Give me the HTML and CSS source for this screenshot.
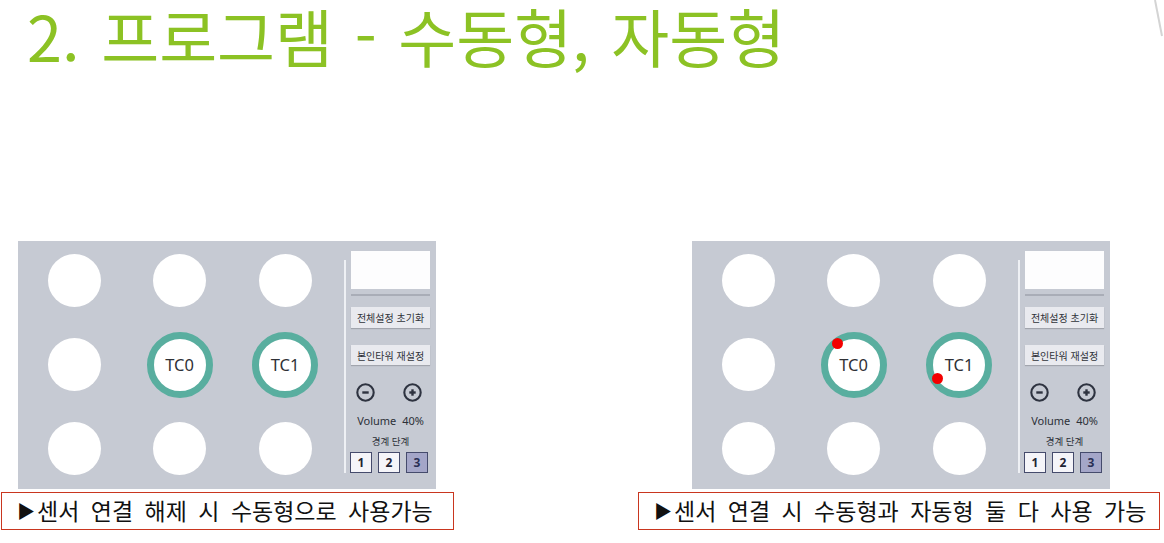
FILE: index.html
```html
<!DOCTYPE html>
<html lang="ko">
<head>
    <meta charset="UTF-8">
    <meta name="viewport" content="width=device-width, initial-scale=1.0">
    <title>프로그램 - 수동형, 자동형</title>
    <link rel="stylesheet" href="styles.css">
</head>
<body>
    <svg class="corner-mark" width="12" height="40" viewBox="0 0 12 40">
        <line x1="3" y1="0" x2="10" y2="36" stroke="#d4d4d4" stroke-width="2"/>
    </svg>

    <h1 class="title">2. 프로그램 - 수동형, 자동형</h1>

    <div class="panels">
        <!-- 센서 연결 해제 상태 -->
        <div class="panel">
            <div class="pads">
                <div class="pad"></div>
                <div class="pad"></div>
                <div class="pad"></div>
                <div class="pad"></div>
                <div class="pad ring">TC0</div>
                <div class="pad ring">TC1</div>
                <div class="pad"></div>
                <div class="pad"></div>
                <div class="pad"></div>
            </div>
            <div class="divider"></div>
            <div class="side">
                <div class="display"></div>
                <div class="rule"></div>
                <button class="side-btn">전체설정 초기화</button>
                <button class="side-btn second">본인타워 재설정</button>
                <div class="vol-ctrl">
                    <svg width="19" height="19" viewBox="0 0 19 19"><circle cx="9.5" cy="9.5" r="8.2" fill="none" stroke="#2e3340" stroke-width="2.1"/><line x1="6.3" y1="9.5" x2="12.7" y2="9.5" stroke="#2e3340" stroke-width="2.4"/></svg>
                    <svg width="19" height="19" viewBox="0 0 19 19"><circle cx="9.5" cy="9.5" r="8.2" fill="none" stroke="#2e3340" stroke-width="2.1"/><line x1="6.3" y1="9.5" x2="12.7" y2="9.5" stroke="#2e3340" stroke-width="2.4"/><line x1="9.5" y1="6.3" x2="9.5" y2="12.7" stroke="#2e3340" stroke-width="2.4"/></svg>
                </div>
                <div class="vol-label">Volume 40%</div>
                <div class="level-label">경계 단계</div>
                <div class="levels">
                    <span class="level">1</span>
                    <span class="level">2</span>
                    <span class="level active">3</span>
                </div>
            </div>
        </div>

        <!-- 센서 연결 상태 -->
        <div class="panel">
            <div class="pads">
                <div class="pad"></div>
                <div class="pad"></div>
                <div class="pad"></div>
                <div class="pad"></div>
                <div class="pad ring">TC0<span class="dot dot-tl"></span></div>
                <div class="pad ring">TC1<span class="dot dot-bl"></span></div>
                <div class="pad"></div>
                <div class="pad"></div>
                <div class="pad"></div>
            </div>
            <div class="divider"></div>
            <div class="side">
                <div class="display"></div>
                <div class="rule"></div>
                <button class="side-btn">전체설정 초기화</button>
                <button class="side-btn second">본인타워 재설정</button>
                <div class="vol-ctrl">
                    <svg width="19" height="19" viewBox="0 0 19 19"><circle cx="9.5" cy="9.5" r="8.2" fill="none" stroke="#2e3340" stroke-width="2.1"/><line x1="6.3" y1="9.5" x2="12.7" y2="9.5" stroke="#2e3340" stroke-width="2.4"/></svg>
                    <svg width="19" height="19" viewBox="0 0 19 19"><circle cx="9.5" cy="9.5" r="8.2" fill="none" stroke="#2e3340" stroke-width="2.1"/><line x1="6.3" y1="9.5" x2="12.7" y2="9.5" stroke="#2e3340" stroke-width="2.4"/><line x1="9.5" y1="6.3" x2="9.5" y2="12.7" stroke="#2e3340" stroke-width="2.4"/></svg>
                </div>
                <div class="vol-label">Volume 40%</div>
                <div class="level-label">경계 단계</div>
                <div class="levels">
                    <span class="level">1</span>
                    <span class="level">2</span>
                    <span class="level active">3</span>
                </div>
            </div>
        </div>
    </div>

    <div class="captions">
        <div class="caption first"><span class="arrow">▶</span>센서 연결 해제 시 수동형으로 사용가능</div>
        <div class="caption second"><span class="arrow">▶</span>센서 연결 시 수동형과 자동형 둘 다 사용 가능</div>
    </div>
</body>
</html>
```

FILE: styles.css
```css
body {
    margin: 0;
    width: 1164px;
    height: 543px;
    overflow: hidden;
    position: relative;
    background-color: #fff;
    font-family: "Noto Sans", "Noto Sans CJK KR", sans-serif;
}
.corner-mark {
    position: absolute;
    top: 0;
    right: 0;
}
.title {
    margin: 0;
    padding-left: 27px;
    height: 70px;
    font-family: "Noto Sans CJK KR", sans-serif;
    font-size: 63px;
    font-weight: 400;
    line-height: 70px;
    word-spacing: 4px;
    white-space: nowrap;
    color: #8cc224;
}
.panels {
    display: flex;
    gap: 256px;
    margin-top: 171px;
    padding-left: 18px;
}
.panel {
    display: flex;
    width: 418px;
    height: 248px;
    background-color: #c6cad3;
}
.pads {
    display: grid;
    grid-template-columns: repeat(3, 66px);
    grid-auto-rows: 66px;
    column-gap: 39.5px;
    row-gap: 18px;
    padding: 6.5px 0 0 23px;
    place-items: center;
    align-content: start;
}
.pad {
    width: 53px;
    height: 53px;
    border-radius: 50%;
    background-color: #fff;
}
.ring {
    position: relative;
    width: 66px;
    height: 66px;
    box-sizing: border-box;
    border: 7px solid #59ae9f;
    display: flex;
    justify-content: center;
    align-items: center;
    font-size: 16.5px;
    color: #2f3136;
}
.dot {
    position: absolute;
    width: 11px;
    height: 11px;
    border-radius: 50%;
    background-color: #f30000;
}
.dot-tl {
    left: 4px;
    top: -0.5px;
}
.dot-bl {
    left: -1.5px;
    top: 34.5px;
}
.divider {
    width: 2px;
    height: 213px;
    margin: 19px 0 0 26px;
    background-color: #eef0f4;
}
.side {
    display: flex;
    flex-direction: column;
    width: 79px;
    margin-left: 5px;
    padding-top: 10px;
}
.display {
    height: 38px;
    background-color: #fdfdfe;
}
.rule {
    height: 2px;
    margin-top: 5px;
    background-color: #a9adb7;
}
.side-btn {
    height: 21px;
    margin-top: 11px;
    padding: 0;
    border: none;
    background-color: #e9eaef;
    box-shadow: 0 1px 1px rgba(0, 0, 0, 0.18);
    font-family: "Noto Sans CJK KR", sans-serif;
    font-size: 10px;
    color: #30333a;
}
.side-btn.second {
    height: 20px;
    margin-top: 17px;
}
.vol-ctrl {
    display: flex;
    justify-content: center;
    gap: 28px;
    height: 19px;
    margin-top: 18px;
    padding-right: 3px;
}
.vol-label {
    margin-top: 12px;
    height: 14px;
    line-height: 14px;
    font-size: 11px;
    word-spacing: 3px;
    text-align: center;
    color: #2c3038;
}
.level-label {
    margin-top: 7px;
    height: 12px;
    line-height: 12px;
    font-family: "Noto Sans CJK KR", sans-serif;
    font-size: 9.5px;
    text-align: center;
    color: #2c3038;
}
.levels {
    display: flex;
    gap: 6px;
    margin-top: 5px;
    margin-left: -1px;
}
.level {
    width: 22px;
    height: 21px;
    box-sizing: border-box;
    border: 1.5px solid #454b6c;
    background-color: #f5f5f9;
    display: flex;
    justify-content: center;
    align-items: center;
    font-size: 12px;
    font-weight: bold;
    color: #1f2333;
}
.level.active {
    background-color: #a4a6c8;
    color: #2a2f55;
}
.captions {
    display: flex;
    margin-top: 3px;
}
.caption {
    box-sizing: border-box;
    height: 38px;
    padding: 0 0 3px 15px;
    border: 1.5px solid #c9361f;
    display: flex;
    align-items: center;
    font-family: "Noto Sans CJK KR", sans-serif;
    font-size: 23px;
    word-spacing: 5px;
    white-space: nowrap;
    color: #111;
}
.caption .arrow {
    font-size: 18px;
    margin-right: 2px;
}
.caption.first {
    width: 453px;
    margin-left: 1px;
}
.caption.second {
    width: 522px;
    margin-left: 184px;
}
```
